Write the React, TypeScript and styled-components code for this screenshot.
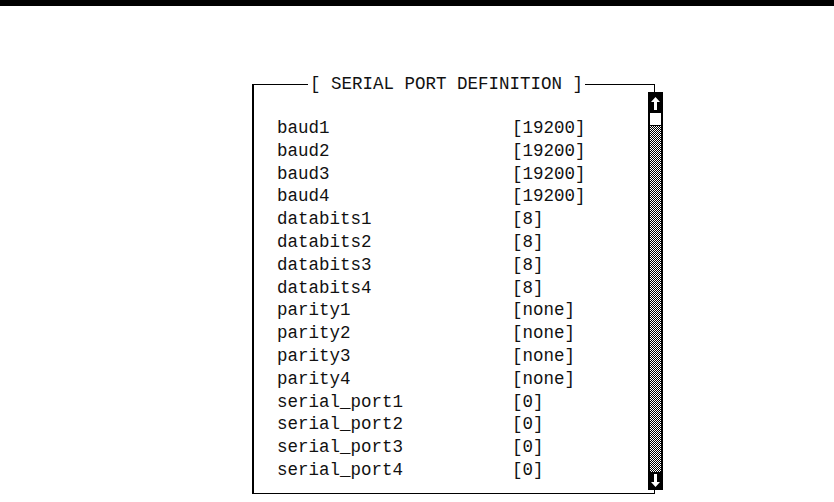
import React from "react";
import styled, { createGlobalStyle } from "styled-components";

const GlobalStyle = createGlobalStyle`
  html, body {
    margin: 0;
    padding: 0;
    background: #ffffff;
  }
  body {
    font-family: "Liberation Mono", "DejaVu Sans Mono", monospace;
    color: #111111;
  }
`;

const Page = styled.div`
  display: flex;
  flex-direction: column;
  width: 834px;
  height: 502px;
  overflow: hidden;
  background: #ffffff;
`;

const TopBar = styled.div`
  height: 6px;
  background: #000000;
  flex: none;
`;

const Stage = styled.div`
  padding: 78px 0 0 252px;
`;

const Frame = styled.div`
  position: relative;
  box-sizing: border-box;
  width: 403px;
  height: 410px;
  display: flex;
  border-top: 1px solid #000;
  border-left: 2px solid #000;
  border-bottom: 1px solid #000;
`;

const Title = styled.span`
  position: absolute;
  top: -12px;
  left: 54px;
  padding: 0 2px;
  background: #ffffff;
  font-size: 17.5px;
  line-height: 22.8px;
  white-space: pre;
`;

const Content = styled.div`
  flex: 1;
  padding: 32px 0 0 23px;
`;

const Rows = styled.div`
  display: grid;
  grid-template-columns: 235px auto;
  font-size: 17.5px;
  line-height: 22.8px;
  white-space: pre;
`;

const Cell = styled.span``;

const ScrollColumn = styled.div`
  width: 15px;
  margin-right: -8px;
  display: flex;
  flex-direction: column;
  flex: none;
`;

const Stub = styled.div<{ $h: number }>`
  width: 1px;
  height: ${(p) => p.$h}px;
  margin-left: 6px;
  background: #000;
  flex: none;
`;

const ScrollBar = styled.div`
  flex: 1;
  box-sizing: border-box;
  border: 1px solid #000;
  display: flex;
  flex-direction: column;
`;

const ArrowBlock = styled.div<{ $h: number }>`
  height: ${(p) => p.$h}px;
  background: #000;
  display: flex;
  align-items: center;
  justify-content: center;
  flex: none;
`;

const Thumb = styled.div`
  height: 12px;
  background: #fff;
  border-left: 1px solid #000;
  border-right: 1px solid #000;
  border-bottom: 1px solid #000;
  flex: none;
`;

const Track = styled.div`
  flex: 1;
  border-left: 1px solid #000;
  border-right: 1px solid #000;
  background: repeating-conic-gradient(#000 0 25%, #fff 0 50%) 0 0 / 2px 2px;
`;

const Arrow = ({ down }: { down?: boolean }) => (
  <svg
    width="9"
    height="13"
    viewBox="0 0 9 13"
    style={down ? { transform: "rotate(180deg)" } : undefined}
  >
    <polygon points="4.5,0 9,5 6,5 6,13 3,13 3,5 0,5" fill="#fff" />
  </svg>
);

const rows: [string, string][] = [
  ["baud1", "[19200]"],
  ["baud2", "[19200]"],
  ["baud3", "[19200]"],
  ["baud4", "[19200]"],
  ["databits1", "[8]"],
  ["databits2", "[8]"],
  ["databits3", "[8]"],
  ["databits4", "[8]"],
  ["parity1", "[none]"],
  ["parity2", "[none]"],
  ["parity3", "[none]"],
  ["parity4", "[none]"],
  ["serial_port1", "[0]"],
  ["serial_port2", "[0]"],
  ["serial_port3", "[0]"],
  ["serial_port4", "[0]"],
];

export default function App() {
  return (
    <Page>
      <GlobalStyle />
      <TopBar />
      <Stage>
        <Frame>
          <Title>[ SERIAL PORT DEFINITION ]</Title>
          <Content>
            <Rows>
              {rows.map(([k, v]) => (
                <React.Fragment key={k}>
                  <Cell>{k}</Cell>
                  <Cell>{v}</Cell>
                </React.Fragment>
              ))}
            </Rows>
          </Content>
          <ScrollColumn>
            <Stub $h={7} />
            <ScrollBar>
              <ArrowBlock $h={20}>
                <Arrow />
              </ArrowBlock>
              <Thumb />
              <Track />
              <ArrowBlock $h={17}>
                <Arrow down />
              </ArrowBlock>
            </ScrollBar>
            <Stub $h={3} />
          </ScrollColumn>
        </Frame>
      </Stage>
    </Page>
  );
}
